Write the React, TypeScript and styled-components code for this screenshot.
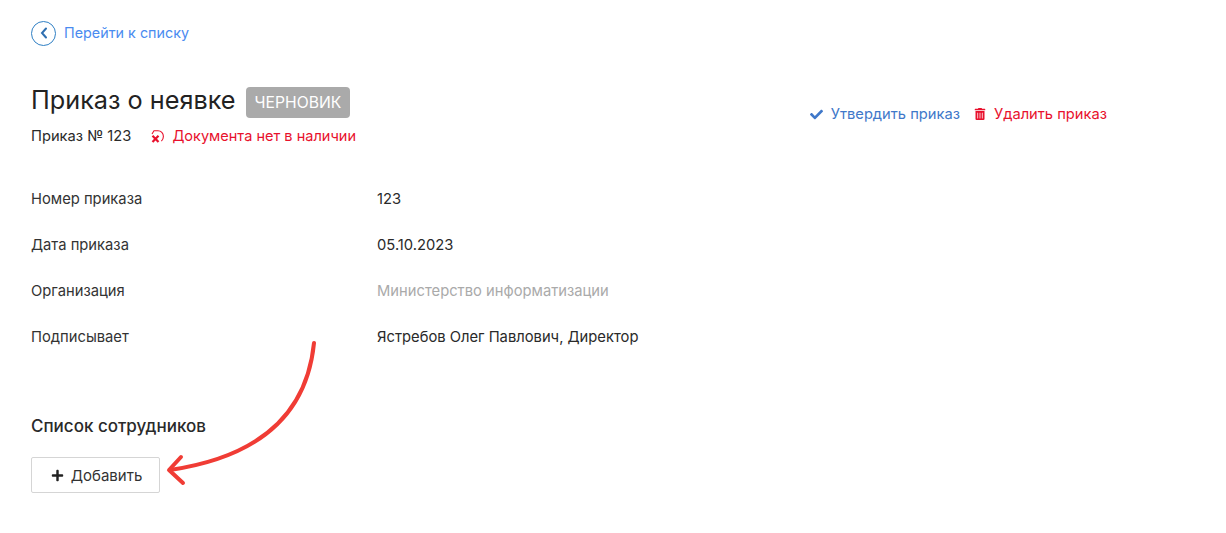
import React from 'react';
import styled, { createGlobalStyle } from 'styled-components';
import { FaCheck, FaPlus, FaTrashAlt } from 'react-icons/fa';

const GlobalStyle = createGlobalStyle`
  html, body { margin: 0; padding: 0; background: #fff; }
  body { font-family: Inter, "Noto Sans", sans-serif; color: #222; }
`;

const Page = styled.div`
  position: relative;
  height: 533px;
  padding: 20px 31px 0;
  box-sizing: border-box;
  overflow: hidden;
`;

const BackLink = styled.a`
  display: flex;
  align-items: center;
  gap: 8px;
  height: 26px;
  font-size: 14.35px;
  line-height: 24px;
  color: #4a8bf0;
`;

const BackCircle = styled.span`
  width: 25px;
  height: 25px;
  box-sizing: border-box;
  border: 1.5px solid #2f7fc4;
  border-radius: 50%;
  display: flex;
  align-items: center;
  justify-content: center;
`;

const HeaderRow = styled.div`
  display: flex;
  justify-content: space-between;
  align-items: flex-start;
  width: 1076px;
  margin-top: 38px;
`;

const TitleRow = styled.div`
  display: flex;
  align-items: flex-start;
  gap: 10px;
`;

const Title = styled.h1`
  margin: 0;
  font-size: 25.25px;
  line-height: 32px;
  font-weight: 400;
  color: #222;
`;

const Badge = styled.span`
  background: #aaa;
  color: #fff;
  border-radius: 4px;
  height: 31px;
  margin-top: 3px;
  padding: 0 9px;
  display: flex;
  align-items: center;
  font-size: 15.7px;
`;

const SubRow = styled.div`
  display: flex;
  align-items: center;
  margin-top: 9px;
  font-size: 14.7px;
  color: #2a2a2a;
`;

const Missing = styled.span`
  display: flex;
  align-items: center;
  gap: 8px;
  margin-left: 20px;
  font-size: 14.55px;
  color: #e8112d;
`;

const Actions = styled.div`
  display: flex;
  gap: 14px;
  font-size: 14.7px;
  margin-top: 21px;
`;

const Action = styled.a<{ $danger?: boolean }>`
  display: flex;
  align-items: center;
  gap: 8px;
  color: ${(p) => (p.$danger ? '#e8112d' : '#3f78c9')};
`;

const Details = styled.dl`
  display: grid;
  grid-template-columns: 346px 1fr;
  grid-auto-rows: 46px;
  margin: 31px 0 0;
  font-size: 14.75px;
  line-height: 46px;
`;

const Label = styled.dt`
  color: #333;
`;

const Value = styled.dd<{ $muted?: boolean }>`
  margin: 0;
  color: ${(p) => (p.$muted ? '#aaa' : '#2a2a2a')};
`;

const SectionTitle = styled.h2`
  margin: 56px 0 0;
  font-size: 17px;
  line-height: 20px;
  font-weight: 500;
  color: #2a2a2a;
`;

const AddButton = styled.button`
  display: flex;
  align-items: center;
  justify-content: center;
  gap: 7px;
  width: 129px;
  height: 36px;
  margin-top: 21px;
  padding: 0 0 0 2px;
  background: #fff;
  border: 1px solid #d5d5d5;
  border-radius: 2px;
  font: inherit;
  font-size: 15px;
  color: #333;
`;

const Arrow = styled.svg`
  position: absolute;
  left: 160px;
  top: 335px;
`;

const rows = [
  { label: 'Номер приказа', value: '123' },
  { label: 'Дата приказа', value: '05.10.2023' },
  { label: 'Организация', value: 'Министерство информатизации', muted: true },
  { label: 'Подписывает', value: 'Ястребов Олег Павлович, Директор' },
];

export default function App() {
  return (
    <Page>
      <GlobalStyle />
      <BackLink>
        <BackCircle>
          <svg width="8" height="12" viewBox="0 0 8 12" fill="none">
            <path d="M6 1.5 2 6l4 4.5" stroke="#2f6fb0" strokeWidth="2" strokeLinecap="round" />
          </svg>
        </BackCircle>
        Перейти к списку
      </BackLink>
      <HeaderRow>
        <div>
          <TitleRow>
            <Title>Приказ о неявке</Title>
            <Badge>ЧЕРНОВИК</Badge>
          </TitleRow>
          <SubRow>
            Приказ № 123
            <Missing>
              <svg width="13" height="13" viewBox="0 0 13 13" fill="none">
                <path d="M1 4 3 .8h4C10 .8 12.400 3.300 12.400 6.500c0 1.800-.7 3.300-2 4.700" stroke="#e8112d" strokeWidth="1.1" />
                <path d="M1.500 5.800l6 6.200M7.500 5.800l-6 6.200" stroke="#e8112d" strokeWidth="2.200" />
              </svg>
              Документа нет в наличии
            </Missing>
          </SubRow>
        </div>
        <Actions>
          <Action>
            <FaCheck size={13} />
            Утвердить приказ
          </Action>
          <Action $danger>
            <FaTrashAlt size={12} />
            Удалить приказ
          </Action>
        </Actions>
      </HeaderRow>
      <Details>
        {rows.map((r) => (
          <React.Fragment key={r.label}>
            <Label>{r.label}</Label>
            <Value $muted={r.muted}>{r.value}</Value>
          </React.Fragment>
        ))}
      </Details>
      <SectionTitle>Список сотрудников</SectionTitle>
      <AddButton>
        <FaPlus size={13} color="#222" />
        Добавить
      </AddButton>
      <Arrow width="170" height="160" viewBox="0 0 170 160" fill="none">
        <path
          d="M154 8C148 68 112 120 10 135"
          stroke="#f03c35"
          strokeWidth="4"
          strokeLinecap="round"
        />
        <path
          d="M21 122 9 135l14 13"
          stroke="#f03c35"
          strokeWidth="4"
          strokeLinecap="round"
          strokeLinejoin="round"
        />
      </Arrow>
    </Page>
  );
}
